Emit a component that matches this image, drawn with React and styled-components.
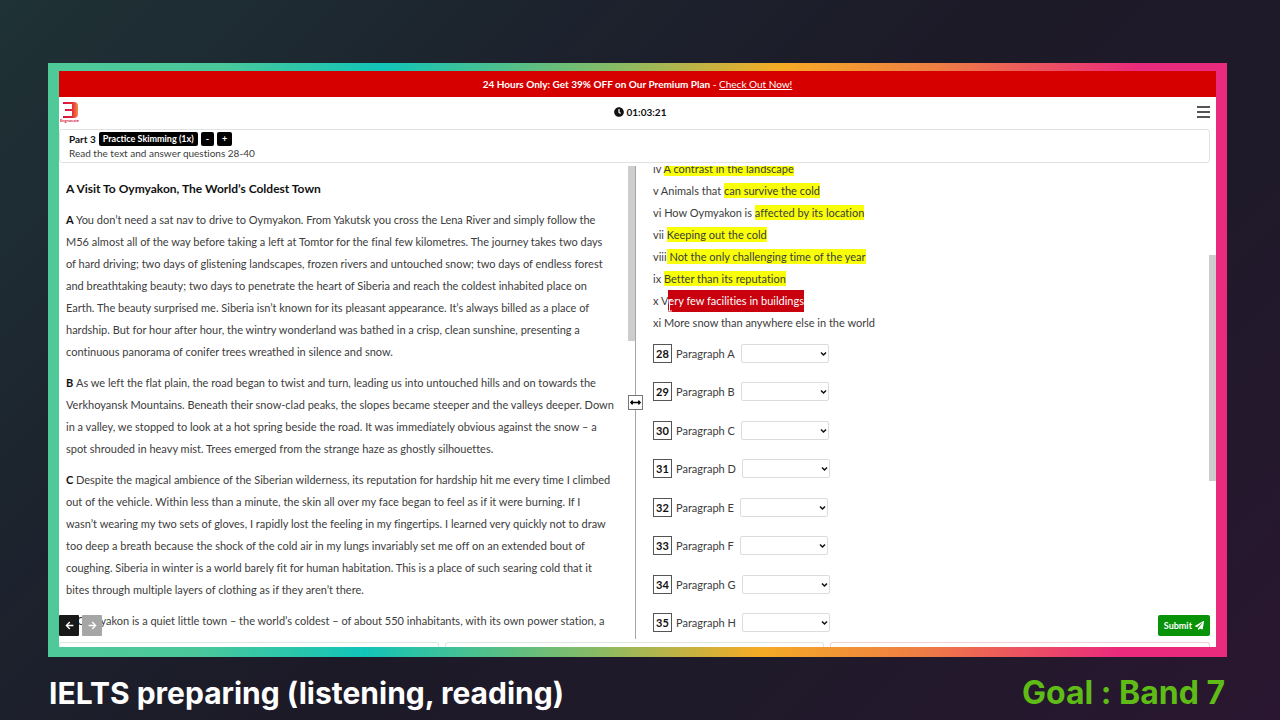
import styled, { createGlobalStyle } from 'styled-components';
import {
  FaArrowLeft,
  FaArrowRight,
  FaArrowsAltH,
  FaClock,
  FaPaperPlane,
} from 'react-icons/fa';

const uiFont = `Lato, 'Open Sans', sans-serif`;

const GlobalStyle = createGlobalStyle`
  * {
    box-sizing: border-box;
  }

  body {
    margin: 0;
    font-family: ${uiFont};
    font-size: 11px;
    font-variant-ligatures: none;
    color: #3c3c3c;
  }
`;

const Slide = styled.div`
  display: flex;
  flex-direction: column;
  height: 100vh;
  padding: 63px 53px 0 48px;
  overflow: hidden;
  background: linear-gradient(135deg, #1f3236 0%, #1c222d 30%, #1d1a28 50%, #1f1a2a 72%, #2a1630 100%);
`;

const Frame = styled.div`
  flex: 1;
  min-height: 0;
  display: flex;
  padding: 8px 11px 10px;
  background: linear-gradient(
    92deg,
    #4fc998 0%,
    #4bc89a 14%,
    #12c4b8 28%,
    #85bb66 47%,
    #f5ab25 61%,
    #ef7f43 74%,
    #ea2a7c 91%
  );
`;

const Screen = styled.main`
  flex: 1;
  min-width: 0;
  display: flex;
  flex-direction: column;
  background: #fff;
  overflow: hidden;
`;

const Banner = styled.div`
  height: 26px;
  line-height: 26px;
  flex-shrink: 0;
  text-align: center;
  color: #fff;
  font-size: 10px;
  background: #d60000;

  a {
    color: #fff;
  }
`;

const Header = styled.header`
  display: grid;
  grid-template-columns: 1fr auto 1fr;
  align-items: center;
  height: 30px;
  margin-bottom: 2px;
  flex-shrink: 0;
`;

const Timer = styled.div`
  display: flex;
  align-items: center;
  gap: 3px;
  padding-left: 5px;
  color: #111;
  font-size: 10px;
  font-weight: 700;
`;

const MenuButton = styled.button`
  justify-self: end;
  display: flex;
  margin-right: 6px;
  padding: 0;
  border: 0;
  background: none;
`;

const PartBox = styled.section`
  flex-shrink: 0;
  height: 34px;
  margin-right: 6px;
  padding: 2px 9px;
  border: 1px solid #e2e2e2;
  border-radius: 3px;
  font-size: 10px;
  line-height: 14px;
`;

const PartRow = styled.div`
  display: flex;
  align-items: center;
  gap: 3px;
  height: 14px;
  color: #111;
`;

const Tag = styled.button`
  height: 14px;
  padding: 0 ${({ $small }) => ($small ? 5 : 4)}px;
  border: 0;
  border-radius: 2px;
  background: #000;
  color: #fff;
  font-family: inherit;
  font-size: 9px;
  font-weight: 700;
  line-height: 14px;
`;

const Columns = styled.div`
  flex: 1;
  min-height: 0;
  display: flex;
  padding-top: 3px;
`;

const Passage = styled.article`
  flex: 1 1 13px;
  min-width: 0;
  padding: 12px 0 0 7px;
  overflow: hidden;
  line-height: 22px;

  h1 {
    margin: 0 0 9px;
    color: #111;
    font-size: 12px;
    line-height: 22px;
  }

  p {
    margin: 0 0 9px;
  }

  b {
    color: #111;
  }
`;

const Line = styled.span`
  display: block;
  white-space: nowrap;
`;

const Divider = styled.div`
  position: relative;
  width: 8px;
  flex-shrink: 0;
  margin-bottom: 3px;
  border-right: 1px solid #a5a5a5;
`;

const Thumb = styled.div`
  width: 7px;
  height: ${({ $size }) => $size}%;
  background: #cdcdcd;
`;

const Handle = styled.button`
  position: absolute;
  top: 229px;
  left: 0;
  display: flex;
  align-items: center;
  justify-content: center;
  width: 15px;
  height: 15px;
  padding: 0;
  border: 1px solid #777;
  background: #fff;
  color: #000;
`;

const Questions = styled.section`
  flex: 1;
  min-width: 0;
  display: flex;
  flex-direction: column;
  padding-left: 17px;
  overflow: hidden;
`;

/* the list is scrolled a few pixels under the part box */
const Headings = styled.ul`
  flex-shrink: 0;
  margin: -8px 0 0;
  padding: 0;
  list-style: none;
  line-height: 22px;
`;

const Mark = styled.mark`
  padding: 1px 0;
  color: #3c3c3c;
  background: #f8ff08;
`;

const Selected = styled.span`
  position: relative;
  display: inline-block;
  color: #fff;
  background: #c9000d;
`;

const Caret = styled.svg`
  position: absolute;
  left: -1px;
  bottom: 0;
`;

const Answers = styled.div`
  flex: 1;
  display: grid;
  grid-auto-rows: 1fr;
`;

const Answer = styled.div`
  display: flex;
  align-items: center;

  b {
    width: 19px;
    margin-right: 4px;
    border: 1px solid #555;
    color: #111;
    line-height: 17px;
    text-align: center;
  }

  label {
    margin-right: 6px;
  }
`;

const SelectBox = styled.div`
  position: relative;
  display: flex;

  select {
    appearance: none;
    width: 88px;
    height: 19px;
    border: 1px solid #dcdcdc;
    border-radius: 2px;
    background: #fff;
  }

  svg {
    position: absolute;
    top: 7px;
    right: 2px;
    pointer-events: none;
  }
`;

const Rail = styled.div`
  width: 7px;
  flex-shrink: 0;
  display: flex;
  flex-direction: column;
  justify-content: center;
  padding-bottom: 72px;
`;

const PartTabs = styled.div`
  flex-shrink: 0;
  display: grid;
  grid-template-columns: repeat(3, 1fr);
  gap: 6px;
  height: 5px;
  padding-right: 6px;
`;

const PartTab = styled.div`
  border: 1px solid ${({ $color }) => $color};
  border-bottom: 0;
  border-radius: 3px 3px 0 0;
`;

const Floating = styled.div`
  position: absolute;
  z-index: 1;
  bottom: 11px;
  ${({ $side }) => $side}: 0;
  display: flex;
  gap: 3px;
`;

const Work = styled.div`
  position: relative;
  flex: 1;
  min-height: 0;
  display: flex;
  flex-direction: column;
`;

const NavButton = styled.button`
  display: flex;
  align-items: center;
  justify-content: center;
  width: 20px;
  height: 21px;
  padding: 0;
  border: 0;
  border-radius: 1px;
  color: #fff;
  background: #181818;

  &:disabled {
    background: #a6a6a6;
  }
`;

const SubmitButton = styled.button`
  display: flex;
  align-items: center;
  gap: 3px;
  height: 21px;
  margin-right: 6px;
  padding: 0 6px;
  border: 0;
  border-radius: 2px;
  background: #089308;
  color: #fff;
  font-family: inherit;
  font-size: 9px;
  font-weight: 700;
`;

const Caption = styled.footer`
  display: flex;
  justify-content: space-between;
  height: 63px;
  padding: 18px 2px 0 1px;
  font-family: Inter, 'Open Sans', sans-serif;
  font-size: 30px;
  font-weight: 700;
  line-height: 36px;
  color: #fff;
`;

const Goal = styled.span`
  color: #5fbc16;
  font-size: 32px;
`;

const paragraphs = [
  {
    letter: 'A',
    lines: [
      'You don’t need a sat nav to drive to Oymyakon. From Yakutsk you cross the Lena River and simply follow the',
      'M56 almost all of the way before taking a left at Tomtor for the final few kilometres. The journey takes two days',
      'of hard driving; two days of glistening landscapes, frozen rivers and untouched snow; two days of endless forest',
      'and breathtaking beauty; two days to penetrate the heart of Siberia and reach the coldest inhabited place on',
      'Earth. The beauty surprised me. Siberia isn’t known for its pleasant appearance. It’s always billed as a place of',
      'hardship. But for hour after hour, the wintry wonderland was bathed in a crisp, clean sunshine, presenting a',
      'continuous panorama of conifer trees wreathed in silence and snow.',
    ],
  },
  {
    letter: 'B',
    lines: [
      'As we left the flat plain, the road began to twist and turn, leading us into untouched hills and on towards the',
      'Verkhoyansk Mountains. Beneath their snow-clad peaks, the slopes became steeper and the valleys deeper. Down',
      'in a valley, we stopped to look at a hot spring beside the road. It was immediately obvious against the snow – a',
      'spot shrouded in heavy mist. Trees emerged from the strange haze as ghostly silhouettes.',
    ],
  },
  {
    letter: 'C',
    lines: [
      'Despite the magical ambience of the Siberian wilderness, its reputation for hardship hit me every time I climbed',
      'out of the vehicle. Within less than a minute, the skin all over my face began to feel as if it were burning. If I',
      'wasn’t wearing my two sets of gloves, I rapidly lost the feeling in my fingertips. I learned very quickly not to draw',
      'too deep a breath because the shock of the cold air in my lungs invariably set me off on an extended bout of',
      'coughing. Siberia in winter is a world barely fit for human habitation. This is a place of such searing cold that it',
      'bites through multiple layers of clothing as if they aren’t there.',
    ],
  },
  {
    letter: 'D',
    lines: [
      'Oymyakon is a quiet little town – the world’s coldest – of about 550 inhabitants, with its own power station, a',
    ],
  },
];

const headings = [
  { text: 'iv ', marked: 'A contrast in the landscape' },
  { text: 'v Animals that ', marked: 'can survive the cold' },
  { text: 'vi How Oymyakon is ', marked: 'affected by its location' },
  { text: 'vii ', marked: 'Keeping out the cold' },
  { text: 'viii', marked: ' Not the only challenging time of the year' },
  { text: 'ix ', marked: 'Better than its reputation' },
  { text: 'x V', selected: 'ery few facilities in buildings' },
  { text: 'xi More snow than anywhere else in the world' },
];

const questions = ['A', 'B', 'C', 'D', 'E', 'F', 'G', 'H'].map((letter, i) => ({
  number: 28 + i,
  label: `Paragraph ${letter}`,
}));

const Logo = () => (
  <svg width="22" height="24" viewBox="0 0 22 24" role="img" aria-label="Engnovate">
    <defs>
      <linearGradient id="logo" x1="0" x2="1">
        <stop offset="0" stopColor="#d8103a" />
        <stop offset="0.6" stopColor="#e22a38" />
        <stop offset="1" stopColor="#f58a4a" />
      </linearGradient>
    </defs>
    <path
      d="M4 2H15Q19 2 19 6V14Q19 18 15 18H4V16H13V11H6V9H13V4H4Z"
      fill="url(#logo)"
    />
    <text x="1" y="22" fontSize="4" fontWeight="700" fill="#d8103a">
      Engnovate
    </text>
  </svg>
);

const App = () => {
  return (
    <Slide>
      <GlobalStyle />
      <Frame>
        <Screen>
          <Banner>
            <b>24 Hours Only: Get 39% OFF on Our Premium Plan</b> -{' '}
            <a href="#premium">Check Out Now!</a>
          </Banner>
          <Header>
            <Logo />
            <Timer>
              <FaClock size={10} />
              01:03:21
            </Timer>
            <MenuButton aria-label="Menu">
              <svg width="13" height="12" viewBox="0 0 13 12">
                <path d="M0 1H13M0 6H13M0 11H13" stroke="#555" strokeWidth="2" />
              </svg>
            </MenuButton>
          </Header>
          <PartBox>
            <PartRow>
              <b>Part 3</b>
              <Tag>Practice Skimming (1x)</Tag>
              <Tag $small>-</Tag>
              <Tag $small>+</Tag>
            </PartRow>
            Read the text and answer questions 28-40
          </PartBox>
          <Work>
            <Columns>
              <Passage>
                <h1>A Visit To Oymyakon, The World’s Coldest Town</h1>
                {paragraphs.map(({ letter, lines }) => (
                  <p key={letter}>
                    {lines.map((line, i) => (
                      <Line key={line}>
                        {i === 0 && <b>{letter} </b>}
                        {line}
                      </Line>
                    ))}
                  </p>
                ))}
              </Passage>
              <Divider>
                <Thumb $size={37} />
                <Handle aria-label="Resize columns">
                  <FaArrowsAltH size={11} />
                </Handle>
              </Divider>
              <Questions>
                <Headings>
                  {headings.map(({ text, marked, selected }) => (
                    <li key={text}>
                      {text}
                      {marked && <Mark>{marked}</Mark>}
                      {selected && (
                        <Selected>
                          {selected}
                          <Caret width="5" height="13" viewBox="0 0 5 13">
                            <path
                              d="M0 1H5M2.5 1V12M0 12H5"
                              fill="none"
                              stroke="#fff"
                            />
                          </Caret>
                        </Selected>
                      )}
                    </li>
                  ))}
                </Headings>
                <Answers>
                  {questions.map(({ number, label }) => (
                    <Answer key={number}>
                      <b>{number}</b>
                      <label htmlFor={`q${number}`}>{label}</label>
                      <SelectBox>
                        <select id={`q${number}`} />
                        <svg width="7" height="6" viewBox="0 0 7 6">
                          <path
                            d="M1 1.5L3.5 4L6 1.5"
                            fill="none"
                            stroke="#111"
                            strokeWidth="1.5"
                          />
                        </svg>
                      </SelectBox>
                    </Answer>
                  ))}
                </Answers>
              </Questions>
              <Rail>
                <Thumb $size={56} />
              </Rail>
            </Columns>
            <PartTabs>
              <PartTab $color="#dfe6e2" />
              <PartTab $color="#dfe6e2" />
              <PartTab $color="#f3cfd6" />
            </PartTabs>
            <Floating $side="left">
              <NavButton aria-label="Previous">
                <FaArrowLeft size={9} />
              </NavButton>
              <NavButton aria-label="Next" disabled>
                <FaArrowRight size={9} />
              </NavButton>
            </Floating>
            <Floating $side="right">
              <SubmitButton>
                Submit <FaPaperPlane size={9} />
              </SubmitButton>
            </Floating>
          </Work>
        </Screen>
      </Frame>
      <Caption>
        <span>IELTS preparing (listening, reading)</span>
        <Goal>Goal : Band 7</Goal>
      </Caption>
    </Slide>
  );
};

export default App;
